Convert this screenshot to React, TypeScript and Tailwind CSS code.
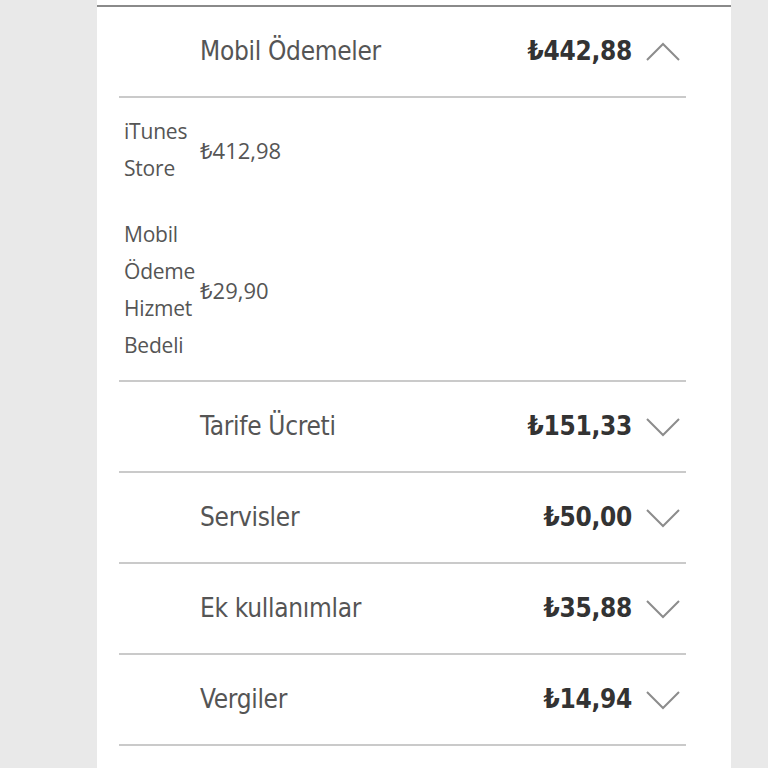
import React from "react";

type Row = { label: string; amount: string; open?: boolean };

const rows: Row[] = [
  { label: "Tarife Ücreti", amount: "₺151,33" },
  { label: "Servisler", amount: "₺50,00" },
  { label: "Ek kullanımlar", amount: "₺35,88" },
  { label: "Vergiler", amount: "₺14,94" },
];

const subItems = [
  { label: "iTunes Store", amount: "₺412,98" },
  { label: "Mobil Ödeme Hizmet Bedeli", amount: "₺29,90" },
];

function Chevron({ up }: { up?: boolean }) {
  return (
    <svg width="34" height="20" viewBox="0 0 34 20" className="shrink-0">
      <path
        d={up ? "M1 18 L17 2 L33 18" : "M1 2 L17 18 L33 2"}
        fill="none"
        stroke="#8c8c8c"
        strokeWidth="2"
      />
    </svg>
  );
}

function Header({ label, amount, open }: Row) {
  return (
    <div className="flex h-[91px] items-center border-b-2 border-[#cacaca] pl-[81px] pr-[6px]">
      <span className="flex-1 text-[26px] text-[#555] tracking-[-0.3px]">{label}</span>
      <span className="mr-[14px] text-[26px] font-bold text-[#333] tracking-[-0.3px]">{amount}</span>
      <Chevron up={open} />
    </div>
  );
}

export default function App() {
  return (
    <div
      className="min-h-screen bg-[#e9e9e9]"
      style={{ fontFamily: '"Liberation Sans Narrow", "DejaVu Sans Condensed", "Liberation Sans", sans-serif' }}
    >
      <div className="ml-[97px] w-[634px] min-h-screen bg-white pt-[5px]">
        <div className="border-t-2 border-[#8a8a8a]" />
        <div className="ml-[22px] mr-[45px]">
          <Header label="Mobil Ödemeler" amount="₺442,88" open />
          <div
            className="flex flex-col gap-[29px] border-b-2 border-[#cacaca] pb-[16px] pt-[15px] pl-[5px]"
            style={{ fontFamily: '"Open Sans", "Noto Sans", sans-serif' }}
          >
            {subItems.map((s) => (
              <div key={s.label} className="flex items-center">
                <span className="w-[76px] text-[21px] leading-[37px] text-[#555] tracking-[-0.2px]">{s.label}</span>
                <span className="text-[22px] text-[#555]">{s.amount}</span>
              </div>
            ))}
          </div>
          {rows.map((r) => (
            <Header key={r.label} {...r} />
          ))}
        </div>
      </div>
    </div>
  );
}
